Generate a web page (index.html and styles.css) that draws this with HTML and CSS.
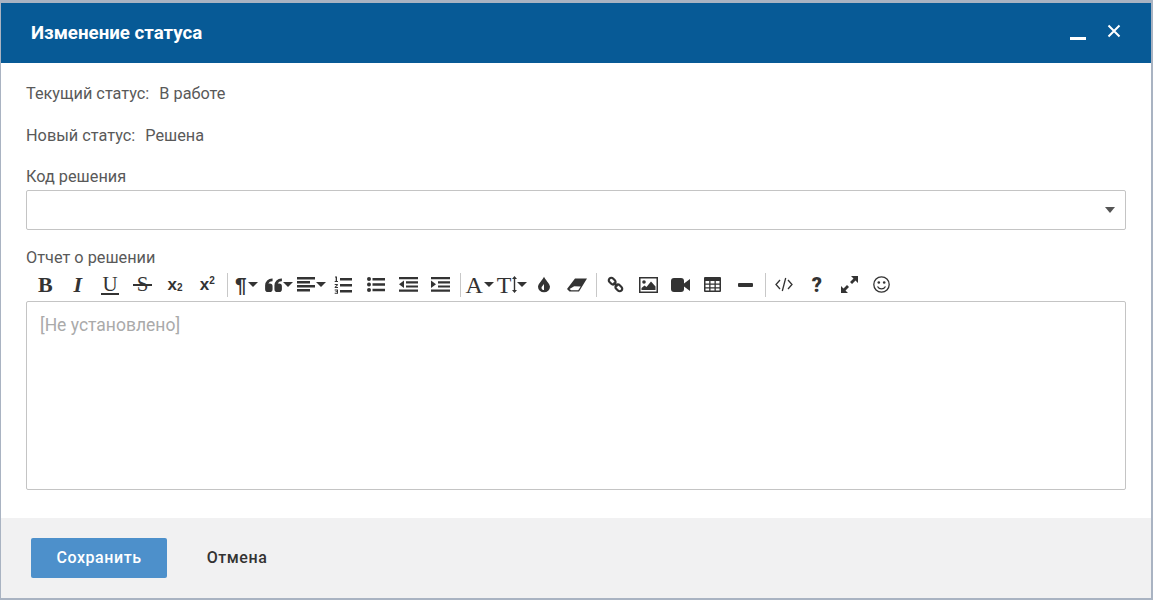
FILE: index.html
```html
<!DOCTYPE html>
<html lang="ru">
<head>
<meta charset="utf-8">
<title>Изменение статуса</title>
<link rel="stylesheet" href="styles.css">
</head>
<body>
<div class="dialog">
  <header class="head">
    <h1 class="title">Изменение статуса</h1>
    <div class="win-actions">
      <span class="win-min"></span>
      <svg class="win-close" width="14" height="14" viewBox="0 0 14 14"><path d="M1.500 1.500l11 11M12.500 1.500l-11 11" stroke="#fff" stroke-width="2"/></svg>
    </div>
  </header>
  <main class="content">
    <div class="row"><span class="key">Текущий статус:</span><span>В работе</span></div>
    <div class="row row-two"><span class="key">Новый статус:</span><span>Решена</span></div>
    <div class="label label-code">Код решения</div>
    <div class="select"><span class="select-caret"></span></div>
    <div class="label label-report">Отчет о решении</div>
    <div class="toolbar">
      <span class="tb t-b">B</span>
      <span class="tb t-i">I</span>
      <span class="tb t-u">U</span>
      <span class="tb t-s">S</span>
      <span class="tb t-x">x<span class="sub">2</span></span>
      <span class="tb t-x">x<span class="sup">2</span></span>
      <span class="sep"></span>
      <span class="tb"><span class="t-para">¶</span><i class="caret"></i></span>
      <span class="tb"><svg width="17" height="14" viewBox="0 0 18 15"><path d="M0 8a7.500 7.500 0 0 1 7.500-7.500h.5v3h-.5A4.500 4.500 0 0 0 3.500 6H5a3 3 0 0 1 3 3v3a3 3 0 0 1-3 3H3a3 3 0 0 1-3-3zM10 8a7.500 7.500 0 0 1 7.500-7.500h.5v3h-.5A4.500 4.500 0 0 0 13.500 6H15a3 3 0 0 1 3 3v3a3 3 0 0 1-3 3h-2a3 3 0 0 1-3-3z" fill="#333"/></svg><i class="caret"></i></span>
      <span class="tb"><svg width="18" height="15" viewBox="0 0 18 15"><path d="M0 0h18v2.500H0zM0 4h13v2.500H0zM0 8h18v2.500H0zM0 12h13v2.500H0z" fill="#333"/></svg><i class="caret"></i></span>
      <span class="tb"><svg width="18" height="18" viewBox="0 0 18 18"><path d="M6 2h12v2.500H6zM6 8h12v2.500H6zM6 14h12v2.500H6z" fill="#333"/><path d="M1 .5h2v4.500h1v1H.7V5h1V1.500H1zM.7 8h3l.3 1-2 2h2v1H.7v-1l2-2H.7zM.7 13.500h3.300v4.300H.7v-1h2.300v-.7H1.500v-.9H3v-.7H.7z" fill="#333"/></svg></span>
      <span class="tb"><svg width="18" height="15" viewBox="0 0 18 15"><circle cx="2" cy="2" r="2" fill="#333"/><circle cx="2" cy="7.500" r="2" fill="#333"/><circle cx="2" cy="13" r="2" fill="#333"/><path d="M5.500 1h12.500v2.500H5.500zM5.500 6.300h12.500v2.500H5.500zM5.500 11.700h12.500v2.500H5.500z" fill="#333"/></svg></span>
      <span class="tb"><svg width="19" height="15" viewBox="0 0 19 15"><path d="M0 0h19v2.200H0zM7 4.200h12v2.200H7zM7 8.400h12v2.200H7zM0 12.500h19v2.200H0zM5 3.500v7.500L0 7.300z" fill="#333"/></svg></span>
      <span class="tb"><svg width="19" height="15" viewBox="0 0 19 15"><path d="M0 0h19v2.200H0zM7 4.200h12v2.200H7zM7 8.400h12v2.200H7zM0 12.500h19v2.200H0zM0 3.500v7.500l5-3.700z" fill="#333"/></svg></span>
      <span class="sep"></span>
      <span class="tb"><span class="t-a">A</span><i class="caret"></i></span>
      <span class="tb"><span class="t-a">T</span><svg class="size-arrow" width="5" height="17" viewBox="0 0 5 17"><path d="M2.500 0L5 3H3.200v11H5l-2.500 3L0 14h1.800V3H0z" fill="#333"/></svg><i class="caret caret-tight"></i></span>
      <span class="tb"><svg width="12" height="17" viewBox="0 0 13 17"><path fill-rule="evenodd" d="M6.500 0c1 3 6.500 7.500 6.500 11a6.500 6 0 0 1-13 0C0 7.500 5.500 3 6.500 0zM6.500 8C5 10 3.800 11 3.800 12c0 1.700 1.300 2.500 2.700 2.500z" fill="#333"/></svg></span>
      <span class="tb"><svg width="20" height="14" viewBox="0 0 20 14"><path fill-rule="evenodd" d="M0 11L8 0.500h12L12 13.500H2.500zM2.500 11l1.700 1.200h7l2.500-3.700-6.500-.2z" fill="#333"/></svg></span>
      <span class="sep"></span>
      <span class="tb"><svg width="17" height="17" viewBox="0 0 17 17"><g fill="none" stroke="#333" stroke-width="2.200"><rect x="-3.500" y="-2.500" width="7.500" height="5" rx="2.500" transform="translate(5 5) rotate(45)"/><rect x="-4" y="-2.500" width="7.500" height="5" rx="2.500" transform="translate(12 12) rotate(45)"/><path d="M6.500 6.500l4 4"/></g></svg></span>
      <span class="tb"><svg width="19" height="16" viewBox="0 0 19 16"><rect x=".75" y=".75" width="17.500" height="14.500" fill="none" stroke="#333" stroke-width="1.500"/><circle cx="5" cy="5" r="1.800" fill="#333"/><path d="M2.500 13v-2l3-2.500 2 1.500 4.500-5.500 4.500 5v3.500z" fill="#333"/></svg></span>
      <span class="tb"><svg width="19" height="14" viewBox="0 0 19 14"><rect width="13" height="14" rx="3" fill="#333"/><path d="M13 5.500L19 1v12l-6-4.500z" fill="#333"/></svg></span>
      <span class="tb"><svg width="17" height="15" viewBox="0 0 17 15"><path fill-rule="evenodd" d="M1 0h15a1 1 0 0 1 1 1v13a1 1 0 0 1-1 1H1a1 1 0 0 1-1-1V1a1 1 0 0 1 1-1zM1.500 4v2.500h3.700V4zM6.500 4v2.500h4V4zM11.800 4v2.500h3.700V4zM1.500 7.800v2.400h3.700V7.800zM6.500 7.800v2.400h4V7.800zM11.800 7.800v2.400h3.700V7.800zM1.500 11.500v2h3.700v-2zM6.500 11.500v2h4v-2zM11.800 11.500v2h3.700v-2z" fill="#333"/></svg></span>
      <span class="tb"><svg width="15" height="4" viewBox="0 0 15 4"><rect width="15" height="4" rx="1" fill="#333"/></svg></span>
      <span class="sep"></span>
      <span class="tb"><svg width="18" height="15" viewBox="0 0 18 15"><path d="M5 3L1 7.500 5 12M13 3l4 4.500L13 12M10.700 1L7.300 14" fill="none" stroke="#333" stroke-width="1.300"/></svg></span>
      <span class="tb t-q">?</span>
      <span class="tb"><svg width="17" height="17" viewBox="0 0 17 17"><path d="M10 0h7v7l-2.500-2.500L11 8 9 6l3.500-3.500zM0 17v-7l2.500 2.500L6 9l2 2-3.500 3.500L7 17z" fill="#333"/></svg></span>
      <span class="tb"><svg width="17" height="17" viewBox="0 0 17 17"><circle cx="8.500" cy="8.500" r="7.700" fill="none" stroke="#333" stroke-width="1.300"/><circle cx="5.800" cy="6.500" r="1.300" fill="#333"/><circle cx="11.200" cy="6.500" r="1.300" fill="#333"/><path d="M4.500 10.500a4.500 4.500 0 0 0 8 0" fill="none" stroke="#333" stroke-width="1.300"/></svg></span>
    </div>
    <div class="editor"><span class="placeholder">[Не установлено]</span></div>
  </main>
  <footer class="foot">
    <button class="btn btn-save" type="button">Сохранить</button>
    <button class="btn btn-cancel" type="button">Отмена</button>
  </footer>
</div>
</body>
</html>
```

FILE: styles.css
```css
* { box-sizing: border-box; }
html, body { margin: 0; height: 100%; }
body {
  background: #a9b3c2;
  padding: 3px 2px 2px 1px;
  font-family: Roboto, "Liberation Sans", sans-serif;
  font-size: 16.300px;
  color: #595959;
  overflow: hidden;
}
.dialog { background: #fff; height: 595px; display: flex; flex-direction: column; }
.head {
  height: 60px;
  background: #075a96;
  display: flex;
  align-items: center;
  justify-content: space-between;
  padding: 0 30px;
}
.title { margin: 0; font-size: 18.700px; font-weight: 700; color: #fff; }
.win-actions { display: flex; align-items: flex-start; gap: 21px; }
.win-min { width: 16px; height: 3px; background: #fff; margin-top: 11px; }
.win-close { display: block; margin-top: -2px; }
.content { flex: 1; padding: 21px 25px 28px; }
.row { line-height: 20px; display: flex; }
.row-two { margin-top: 22px; }
.key { margin-right: 10px; }
.label { line-height: 20px; }
.label-code { margin-top: 21px; margin-bottom: 3px; }
.label-report { margin-top: 18px; }
.select {
  height: 40px;
  border: 1px solid #c4c4c4;
  border-radius: 2px;
  display: flex;
  align-items: center;
  justify-content: flex-end;
  padding-right: 10px;
}
.select-caret { width: 0; height: 0; border-left: 5px solid transparent; border-right: 5px solid transparent; border-top: 6px solid #555; }
.toolbar { display: flex; height: 33px; padding-left: 3.200px; align-items: center; color: #333; }
.tb {
  width: 32.400px;
  flex: none;
  height: 33px;
  display: flex;
  align-items: center;
  justify-content: center;
  font-size: 18px;
  line-height: 1;
  position: relative;
}
.sep { width: 6.600px; flex: none; height: 24px; position: relative; }
.sep::before { content: ""; position: absolute; left: 3px; top: 0; bottom: 0; width: 1px; background: #c8c8c8; }
.t-b, .t-i, .t-u, .t-s, .t-a { font-family: "Liberation Serif", serif; }
.t-b { font-weight: 700; font-size: 22px; }
.t-i { font-style: italic; font-weight: 700; font-size: 22px; }
.t-u { font-size: 21px; }
.t-u::after { content: ""; position: absolute; left: 7px; right: 7px; top: 25px; height: 1.500px; background: #333; }
.t-s { font-size: 21px; }
.t-s::after { content: ""; position: absolute; left: 7px; right: 7px; top: 16px; height: 1.500px; background: #333; }
.t-x { font-family: "Liberation Sans", sans-serif; font-weight: 700; font-size: 17px; }
.sub, .sup { font-size: 10px; font-weight: 700; }
.sub { align-self: flex-end; margin-bottom: 8px; }
.sup { align-self: flex-start; margin-top: 8px; }
.t-para { font-family: "Liberation Sans", sans-serif; font-weight: 700; font-size: 21px; }
.t-a { font-size: 24px; }
.t-q { font-family: Roboto, sans-serif; font-weight: 900; font-size: 20px; }
.size-arrow { margin: 0 0 0 1px; }
.caret {
  flex: none;
  width: 0;
  height: 0;
  margin-left: 1px;
  border-left: 5px solid transparent;
  border-right: 5px solid transparent;
  border-top: 5px solid #333;
}
.caret-tight { margin-left: 0; }
.editor { height: 189px; border: 1px solid #c4c4c4; border-radius: 2px; padding: 13px; }
.placeholder { font-size: 17.500px; line-height: 20px; color: #aaa; display: block; }
.foot {
  height: 80px;
  background: #f1f1f2;
  padding: 20px 30px;
  display: flex;
  align-items: flex-start;
}
.btn {
  height: 40px;
  border: 0;
  border-radius: 2px;
  padding: 0 0 2px;
  font-family: Roboto, "Liberation Sans", sans-serif;
  font-size: 16px;
  font-weight: 500;
  letter-spacing: .55px;
}
.btn-save { width: 136px; background: #4d90cb; color: #fff; }
.btn-cancel { margin-left: 10px; width: 120px; text-align: center; background: transparent; color: #333; }
```
